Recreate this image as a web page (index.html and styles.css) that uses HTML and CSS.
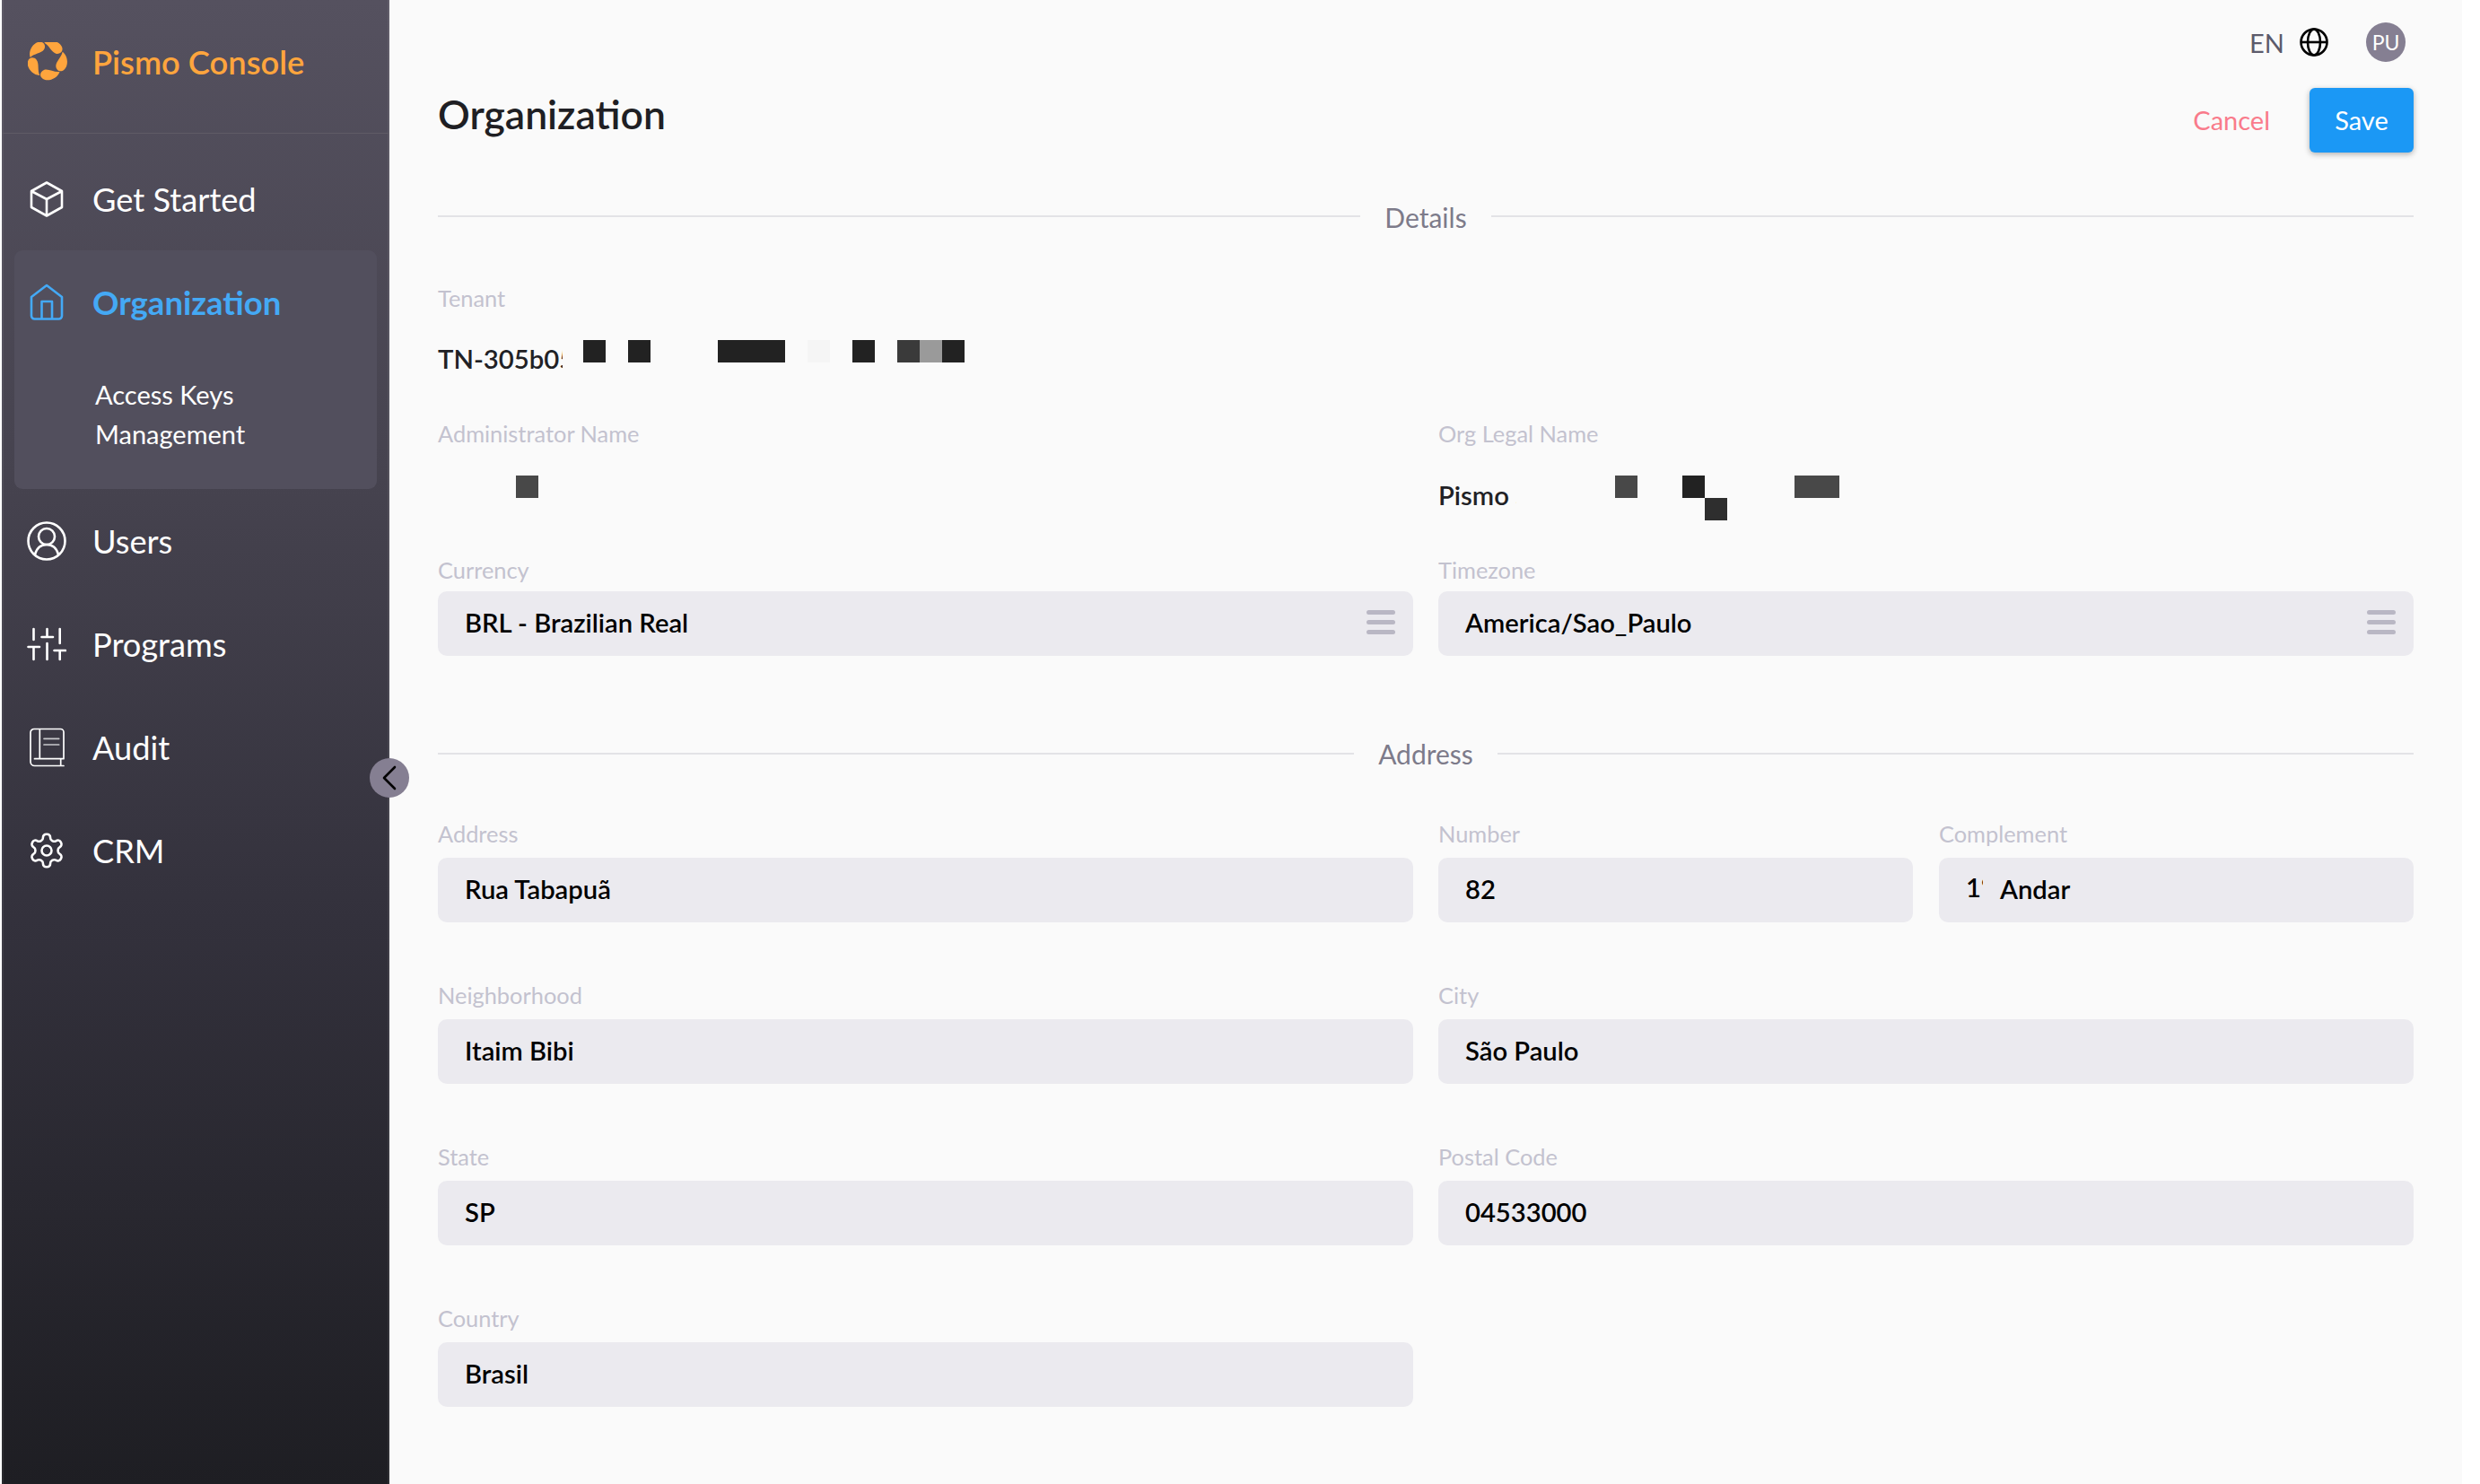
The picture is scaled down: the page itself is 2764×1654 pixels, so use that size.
FILE: index.html
```html
<!DOCTYPE html>
<html lang="en">
<head>
<meta charset="utf-8">
<title>Pismo Console - Organization</title>
<link rel="stylesheet" href="styles.css">
</head>
<body>
<div class="app">
  <aside class="sidebar">
    <header class="brand">
      <svg class="logo" viewBox="33 39 132 132" aria-hidden="true">
        <g id="petals" fill="#ffa53d">
          <path id="petal" d="M41 90C33 68 52 39 72 38C89 37 94 53 87 64C78 77 54 77 41 90Z"/>
          <use href="#petal" transform="rotate(72 98 98)"/>
          <use href="#petal" transform="rotate(144 98 98)"/>
          <use href="#petal" transform="rotate(216 98 98)"/>
          <use href="#petal" transform="rotate(288 98 98)"/>
        </g>
      </svg>
      <span class="brand-name">Pismo Console</span>
    </header>
    <nav class="nav">
      <a class="nav-item">
        <svg class="icon" viewBox="0 0 44 44"><path d="M22 3.5 39 13V31L22 40.5 5 31V13ZM5 13l17 9 17-9M22 22V40.5"/></svg>
        <span>Get Started</span>
      </a>
      <div class="nav-group">
        <a class="nav-item active">
          <svg class="icon" viewBox="0 0 44 44"><path d="M5 16 22 3 39 16V37a3.5 3.5 0 0 1-3.5 3.5H8.500A3.500 3.500 0 0 1 5 37ZM16.500 40V21H28V40"/></svg>
          <span>Organization</span>
        </a>
        <a class="sub-item">Access Keys Management</a>
      </div>
      <a class="nav-item">
        <svg class="icon" viewBox="0 0 44 44"><circle cx="22" cy="22" r="20.500"/><circle cx="22" cy="17" r="9"/><path d="M9 37C11 29.500 16 26 22 26S33 29.500 35 37"/></svg>
        <span>Users</span>
      </a>
      <a class="nav-item">
        <svg class="icon" viewBox="0 0 44 44"><path d="M7.500 5V17M1.500 25H14M7.500 25V39M22.500 5V14M16.500 14H29M22.500 21V39M36.700 5V21M30.500 29H43M36.700 29V39"/></svg>
        <span>Programs</span>
      </a>
      <a class="nav-item">
        <svg class="icon thin" viewBox="0 0 44 44"><path d="M41 34.700V5A3.500 3.500 0 0 0 37.500 1.500H8A4 4 0 0 0 4 5.500V38A4.500 4.500 0 0 0 8.500 42.500H41M8.500 34.700H41M14.300 1.500V34.700M37.700 34.700V42.500"/><path class="dim" d="M19 12.300H35.700M19 19H35.700"/></svg>
        <span>Audit</span>
      </a>
      <a class="nav-item">
        <svg class="icon gear" viewBox="0 0 24 24"><path d="M12.220 2h-.44a2 2 0 0 0-2 2v.18a2 2 0 0 1-1 1.730l-.43.250a2 2 0 0 1-2 0l-.15-.08a2 2 0 0 0-2.730.730l-.22.380a2 2 0 0 0 .73 2.730l.15.100a2 2 0 0 1 1 1.720v.510a2 2 0 0 1-1 1.740l-.15.090a2 2 0 0 0-.73 2.730l.22.380a2 2 0 0 0 2.730.730l.15-.08a2 2 0 0 1 2 0l.43.250a2 2 0 0 1 1 1.730V20a2 2 0 0 0 2 2h.44a2 2 0 0 0 2-2v-.18a2 2 0 0 1 1-1.730l.43-.25a2 2 0 0 1 2 0l.15.080a2 2 0 0 0 2.730-.73l.22-.39a2 2 0 0 0-.73-2.730l-.15-.08a2 2 0 0 1-1-1.740v-.5a2 2 0 0 1 1-1.740l.15-.09a2 2 0 0 0 .73-2.730l-.22-.38a2 2 0 0 0-2.730-.73l-.15.080a2 2 0 0 1-2 0l-.43-.25a2 2 0 0 1-1-1.730V4a2 2 0 0 0-2-2z"/><circle cx="12" cy="12" r="3"/></svg>
        <span>CRM</span>
      </a>
    </nav>
    <button class="collapse" type="button" aria-label="Collapse">
      <svg viewBox="0 0 44 44"><path d="M28 10 16 22 28 34"/></svg>
    </button>
  </aside>

  <main class="main">
    <div class="topbar">
      <span class="lang">EN</span>
      <svg class="globe" viewBox="0 0 32 32"><circle cx="16" cy="16" r="14.500"/><ellipse cx="16" cy="16" rx="7" ry="14.500"/><path d="M1.500 16H30.500"/></svg>
      <span class="avatar">PU</span>
    </div>
    <div class="page-head">
      <h1 class="page-title">Organization</h1>
      <div class="actions">
        <button class="btn-cancel" type="button">Cancel</button>
        <button class="btn-save" type="button">Save</button>
      </div>
    </div>

    <div class="section-title details-title"><span>Details</span></div>
    <section class="read-grid">
      <div class="field tenant">
        <label class="label">Tenant</label>
        <div class="read-value">
          <span class="clip clip-tenant">TN-305b05</span>
          <span class="pixels pixels-tenant">
            <i class="px k"></i><i class="px"></i><i class="px k"></i><i class="px w3"></i><i class="px w3 k"></i><i class="px"></i><i class="px pale"></i><i class="px"></i><i class="px k"></i><i class="px"></i><i class="px d3"></i><i class="px d9"></i><i class="px k"></i>
          </span>
        </div>
      </div>
      <div class="field">
        <label class="label">Administrator Name</label>
        <div class="read-value"><span class="pixels pixels-admin"><i class="px d4"></i></span></div>
      </div>
      <div class="field">
        <label class="label">Org Legal Name</label>
        <div class="read-value">
          <span class="clip clip-org">Pismo S</span>
          <span class="pixels pixels-org">
            <i class="px d4"></i><i class="px w2"></i><i class="px k"></i><i class="px low d2"></i><i class="px w3"></i><i class="px w2 d4"></i>
          </span>
        </div>
      </div>
      <div class="field select-field">
        <label class="label">Currency</label>
        <div class="input select">BRL - Brazilian Real<span class="burger"><i></i><i></i><i></i></span></div>
      </div>
      <div class="field select-field">
        <label class="label">Timezone</label>
        <div class="input select">America/Sao_Paulo<span class="burger"><i></i><i></i><i></i></span></div>
      </div>
    </section>

    <div class="section-title address-title"><span>Address</span></div>
    <section class="form-grid">
      <div class="field"><label class="label">Address</label><div class="input">Rua Tabapuã</div></div>
      <div class="pair">
        <div class="field"><label class="label">Number</label><div class="input">82</div></div>
        <div class="field"><label class="label">Complement</label><div class="input"><span class="clip clip-floor">1º</span>Andar</div></div>
      </div>
      <div class="field"><label class="label">Neighborhood</label><div class="input">Itaim Bibi</div></div>
      <div class="field"><label class="label">City</label><div class="input">São Paulo</div></div>
      <div class="field"><label class="label">State</label><div class="input">SP</div></div>
      <div class="field"><label class="label">Postal Code</label><div class="input">04533000</div></div>
      <div class="field"><label class="label">Country</label><div class="input">Brasil</div></div>
    </section>
  </main>
</div>
</body>
</html>
```

FILE: styles.css
```css
* { box-sizing: border-box; }
html, body { margin: 0; height: 100%; background: #fff; }
body { font-family: Lato, "Open Sans", sans-serif; overflow: hidden; }

.app {
  display: flex;
  height: 1654px;
  margin: 0 20px 0 2px;
  background: #fafafa;
}

/* Sidebar */
.sidebar {
  position: relative;
  flex: 0 0 432px;
  color: #fff;
  background: linear-gradient(180deg, #55515f 0%, #46434f 32%, #33313c 62%, #1e1e23 100%);
  box-shadow: inset 2px 0 0 rgba(255,255,255,.06), inset -2px 0 0 rgba(255,255,255,.07);
}
.brand {
  display: flex;
  align-items: center;
  gap: 28px;
  height: 149px;
  padding: 0 0 11px 29px;
  border-bottom: 1px solid #5f5c66;
}
.logo { width: 44px; height: 44px; flex: none; }
.brand-name { font-size: 36.300px; font-weight: 600; color: #ffa53d; }
.nav { padding-top: 15px; }
.nav-item {
  display: flex;
  align-items: center;
  gap: 29px;
  height: 115px;
  padding-left: 28px;
  font-size: 36.200px;
  color: #fff;
}
.nav-group {
  margin: 0 14px;
  height: 266px;
  background: #524f5d;
  border-radius: 9px;
}
.nav-group .nav-item { padding-left: 14px; }
.nav-item.active { color: #44a9f5; font-size: 36.500px; font-weight: 700; }
.sub-item {
  display: block;
  width: 300px;
  padding: 24px 0 0 90px;
  font-size: 29px;
  line-height: 44px;
  color: #fff;
}
.icon {
  flex: none;
  width: 44px;
  height: 44px;
  fill: none;
  stroke: currentColor;
  stroke-width: 2.6;
  stroke-linejoin: round;
  stroke-linecap: round;
}
.icon.thin { stroke-width: 1.700; }
.icon .dim { stroke: #c8c8cc; }
.icon.gear { stroke-width: 1.400; }
.collapse {
  position: absolute;
  top: 845px;
  right: -22px;
  width: 44px;
  height: 44px;
  padding: 0;
  border: 0;
  border-radius: 50%;
  background: #857f92;
}
.collapse svg {
  display: block;
  width: 44px;
  height: 44px;
  fill: none;
  stroke: #000;
  stroke-width: 2.6;
  stroke-linecap: round;
  stroke-linejoin: round;
}

/* Main */
.main { flex: 1; min-width: 0; padding: 0 54px; }
.topbar {
  display: flex;
  align-items: center;
  justify-content: flex-end;
  height: 98px;
  padding: 0 9px 4px 0;
}
.lang { font-size: 29px; color: #5c5a6b; }
.globe { width: 32px; height: 32px; margin-left: 17px; fill: none; stroke: #000; stroke-width: 2.600; }
.avatar {
  display: flex;
  align-items: center;
  justify-content: center;
  width: 44px;
  height: 44px;
  margin-left: 42px;
  border-radius: 50%;
  background: #857f92;
  color: #fff;
  font-size: 23px;
}
.page-head { display: flex; align-items: center; justify-content: space-between; height: 72px; }
.page-title { margin: 0 0 16px; font-size: 44.500px; font-weight: 600; color: #1f1f24; }
.actions { display: flex; align-items: center; gap: 44px; }
.btn-cancel { padding: 0 0 2px; border: 0; background: none; font: inherit; font-size: 29px; color: #f97b8b; }
.btn-save {
  width: 116px;
  height: 72px;
  padding: 0 0 2px;
  border: 0;
  border-radius: 6px;
  background: #1b98f5;
  color: #fff;
  font: inherit;
  font-size: 29px;
  box-shadow: 0 2px 6px rgba(0,0,0,.3);
}

.section-title {
  display: flex;
  align-items: center;
  gap: 27px;
  height: 40px;
  font-size: 30px;
  color: #7d7b8a;
}
.section-title::before, .section-title::after { content: ""; flex: 1; height: 2px; background: #e3e3e6; }
.details-title { margin-top: 51px; }
.details-title span { padding-top: 2px; }
.address-title { margin-top: 89px; }

.label { display: block; height: 30px; font-size: 25.400px; line-height: 30px; color: #c3c2cf; }
.read-grid, .form-grid { display: grid; grid-template-columns: 1fr 1fr; column-gap: 28px; }
.read-grid { margin-top: 56px; row-gap: 47px; }
.tenant { grid-column: 1 / -1; }
.read-value {
  display: flex;
  align-items: flex-start;
  height: 42px;
  margin-top: 32px;
  font-size: 29.300px;
  font-weight: 600;
  line-height: 42px;
  color: #212125;
}
.clip { display: inline-block; overflow: hidden; white-space: nowrap; flex: none; }
.clip-tenant { width: 139px; }
.clip-org { width: 87px; margin-top: 1px; }
.clip-floor { width: 19px; height: 40px; margin-right: 19px; }
.pixels { display: flex; flex: none; }
.pixels-tenant { margin-left: 23px; }
.pixels-admin { margin-left: 87px; }
.pixels-org { margin-left: 110px; }
.px { display: block; width: 25px; height: 25px; }
.px.w2 { width: 50px; }
.px.w3 { width: 75px; }
.px.k { background: #222; }
.px.pale { background: #f5f5f5; }
.px.d2 { background: #2e2e2e; }
.px.d3 { background: #3a3a3a; }
.px.d4 { background: #484848; }
.px.d9 { background: #9a9a9a; }
.px.low { margin-top: 25px; }

.select-field { margin-top: 1px; }
.select-field .label { margin-bottom: 9px; }
.input {
  position: relative;
  display: flex;
  align-items: center;
  height: 72px;
  padding: 0 30px 3px;
  border-radius: 10px;
  background: #ebeaef;
  font-size: 29.200px;
  font-weight: 600;
  color: #000;
}
.burger {
  display: flex;
  flex-direction: column;
  gap: 6px;
  width: 32px;
  margin-left: auto;
  margin-right: -10px;
}
.burger i { display: block; height: 5px; border-radius: 3px; background: #b9b7c4; }

.form-grid { margin-top: 54px; row-gap: 66px; }
.form-grid .label { margin-bottom: 12px; }
.pair { display: grid; grid-template-columns: 1fr 1fr; column-gap: 29px; }
```
